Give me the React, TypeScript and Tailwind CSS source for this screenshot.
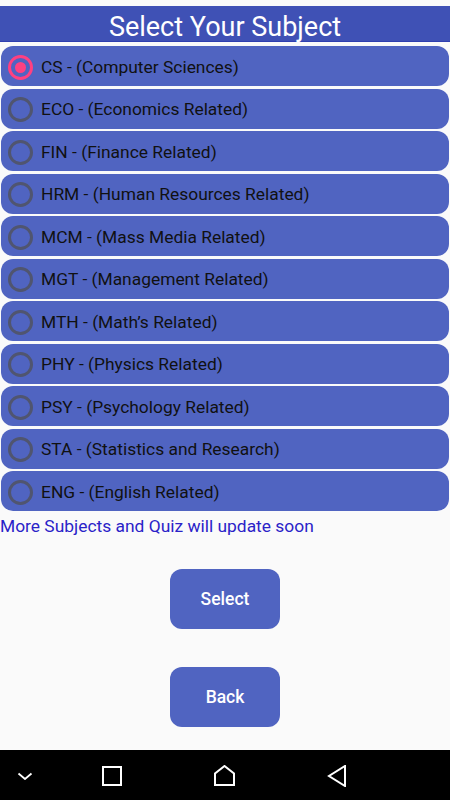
import { useState } from 'react'

const subjects = [
  'CS - (Computer Sciences)',
  'ECO - (Economics Related)',
  'FIN - (Finance Related)',
  'HRM - (Human Resources Related)',
  'MCM - (Mass Media Related)',
  'MGT - (Management Related)',
  'MTH - (Math\u2019s Related)',
  'PHY - (Physics Related)',
  'PSY - (Psychology Related)',
  'STA - (Statistics and Research)',
  'ENG - (English Related)',
]

function Radio({ checked }: { checked: boolean }) {
  return checked ? (
    <span className="flex h-[25px] w-[25px] shrink-0 items-center justify-center rounded-full border-[3px] border-[#ff4081]">
      <span className="h-[11px] w-[11px] rounded-full bg-[#ff4081]" />
    </span>
  ) : (
    <span className="h-[25px] w-[25px] shrink-0 rounded-full border-[3px] border-[#50556f]" />
  )
}

export default function App() {
  const [selected, setSelected] = useState(0)

  return (
    <div className="flex h-[800px] w-[450px] flex-col bg-[#fafafa] font-['Roboto',sans-serif]">
      <div className="mt-[6px] flex h-[36px] items-center justify-center border-b border-[#2f3fb0] bg-[#3f51b5] pt-[7px]">
        <h1 className="text-[27px] leading-none text-white">Select Your Subject</h1>
      </div>

      {/* Subject list */}
      <div className="mt-[4px] flex flex-col gap-[2.5px] px-[1px]">
        {subjects.map((s, i) => (
          <button
            key={s}
            onClick={() => setSelected(i)}
            className="flex h-[40px] items-center gap-[8px] rounded-[12px] bg-[#5064c1] pl-[7px] pt-[2px] text-left"
          >
            <Radio checked={selected === i} />
            <span className="text-[17.4px] text-[#111]">{s}</span>
          </button>
        ))}
      </div>

      <p className="mt-[5px] text-[17.4px] leading-[20px] text-[#2a22c8]">More Subjects and Quiz will update soon</p>

      <div className="mt-[33px] flex flex-col items-center gap-[38px]">
        <button className="h-[60px] w-[110px] rounded-[12px] bg-[#5064c1] text-[17.5px] font-medium text-white">Select</button>
        <button className="h-[60px] w-[110px] rounded-[12px] bg-[#5064c1] text-[17.5px] font-medium text-white">Back</button>
      </div>

      {/* Nav bar */}
      <div className="mt-auto flex h-[50px] items-center bg-black text-white">
        <div className="flex w-[50px] justify-center pt-[2px]">
          <svg width="16" height="8" viewBox="0 0 16 8" fill="none" stroke="white" strokeWidth="1.8">
            <path d="M1.5 1.5l6.5 5.5 6.5-5.5" />
          </svg>
        </div>
        <div className="ml-[52px] pt-[1px]">
          <svg width="20" height="20" viewBox="0 0 20 20" fill="none" stroke="white" strokeWidth="2">
            <rect x="1" y="1" width="18" height="18" />
          </svg>
        </div>
        <div className="ml-[92px] pt-[1px]">
          <svg width="21" height="21" viewBox="0 0 21 21" fill="none" stroke="white" strokeWidth="2">
            <path d="M1 20V8.5l9.5-7.5 9.5 7.5V20z" />
          </svg>
        </div>
        <div className="ml-[92px] pt-[1px]">
          <svg width="20" height="22" viewBox="0 0 20 22" fill="none" stroke="white" strokeWidth="2">
            <path d="M18 1v20L2 11z" />
          </svg>
        </div>
      </div>
    </div>
  )
}
